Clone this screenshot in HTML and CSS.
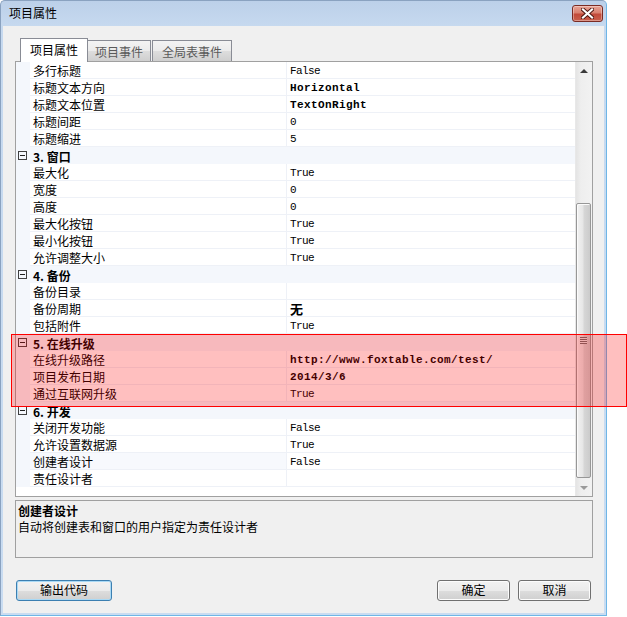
FILE: index.html
```html
<!DOCTYPE html>
<html>
<head>
<meta charset="utf-8">
<title>项目属性</title>
<link rel="stylesheet" href="styles.css">
</head>
<body>
<div class="window">
  <div class="titlebar">
    <span class="title">项目属性</span>
    <div class="close">
      <svg width="13" height="11" viewBox="0 0 13 11">
        <path d="M2 1.5 L11 9.5 M11 1.5 L2 9.5" stroke="#4a1510" stroke-width="4" stroke-linecap="square" fill="none"/>
        <path d="M2 1.5 L11 9.5 M11 1.5 L2 9.5" stroke="#ffffff" stroke-width="2.2" stroke-linecap="square" fill="none"/>
      </svg>
    </div>
  </div>
  <div class="client">
    <div class="tabs">
      <div class="tab active">项目属性</div>
      <div class="tab">项目事件</div>
      <div class="tab">全局表事件</div>
    </div>
    <div class="grid">
      <div class="rows">
        <div class="row"><div class="m"></div><div class="n">多行标题</div><div class="v">False</div></div>
        <div class="row"><div class="m"></div><div class="n">标题文本方向</div><div class="v b">Horizontal</div></div>
        <div class="row"><div class="m"></div><div class="n">标题文本位置</div><div class="v b">TextOnRight</div></div>
        <div class="row"><div class="m"></div><div class="n">标题间距</div><div class="v">0</div></div>
        <div class="row"><div class="m"></div><div class="n">标题缩进</div><div class="v">5</div></div>
        <div class="row cat"><div class="m"><span class="box"></span></div><div class="c">3. 窗口</div></div>
        <div class="row"><div class="m"></div><div class="n">最大化</div><div class="v">True</div></div>
        <div class="row"><div class="m"></div><div class="n">宽度</div><div class="v">0</div></div>
        <div class="row"><div class="m"></div><div class="n">高度</div><div class="v">0</div></div>
        <div class="row"><div class="m"></div><div class="n">最大化按钮</div><div class="v">True</div></div>
        <div class="row"><div class="m"></div><div class="n">最小化按钮</div><div class="v">True</div></div>
        <div class="row"><div class="m"></div><div class="n">允许调整大小</div><div class="v">True</div></div>
        <div class="row cat"><div class="m"><span class="box"></span></div><div class="c">4. 备份</div></div>
        <div class="row"><div class="m"></div><div class="n">备份目录</div><div class="v"></div></div>
        <div class="row"><div class="m"></div><div class="n">备份周期</div><div class="v cjk">无</div></div>
        <div class="row"><div class="m"></div><div class="n">包括附件</div><div class="v">True</div></div>
        <div class="row cat"><div class="m"><span class="box"></span></div><div class="c">5. 在线升级</div></div>
        <div class="row"><div class="m"></div><div class="n">在线升级路径</div><div class="v b">http://www.foxtable.com/test/</div></div>
        <div class="row"><div class="m"></div><div class="n">项目发布日期</div><div class="v b">2014/3/6</div></div>
        <div class="row"><div class="m"></div><div class="n">通过互联网升级</div><div class="v">True</div></div>
        <div class="row cat"><div class="m"><span class="box"></span></div><div class="c">6. 开发</div></div>
        <div class="row"><div class="m"></div><div class="n">关闭开发功能</div><div class="v">False</div></div>
        <div class="row"><div class="m"></div><div class="n">允许设置数据源</div><div class="v">True</div></div>
        <div class="row selected"><div class="m"></div><div class="n">创建者设计</div><div class="v">False</div></div>
        <div class="row"><div class="m"></div><div class="n">责任设计者</div><div class="v"></div></div>
      </div>
      <div class="scrollbar">
        <div class="sb-btn"><span class="arrow up"></span></div>
        <div class="sb-track">
          <div class="thumb"><span class="grip"></span></div>
        </div>
        <div class="sb-btn"><span class="arrow down"></span></div>
      </div>
    </div>
    <div class="desc">
      <div class="desc-title">创建者设计</div>
      <div class="desc-text">自动将创建表和窗口的用户指定为责任设计者</div>
    </div>
    <div class="buttons">
      <div class="btn default wide">输出代码</div>
      <div class="btn">确定</div>
      <div class="btn">取消</div>
    </div>
  </div>
</div>
<div class="highlight"></div>
</body>
</html>
```

FILE: styles.css
```css
* { box-sizing: border-box; }
html, body { margin: 0; padding: 0; background: #ffffff; }
body {
  font-family: "Noto Sans CJK SC", "Noto Sans", sans-serif;
  font-size: 12px;
  color: #000;
  width: 627px;
  height: 617px;
  overflow: hidden;
  position: relative;
}

.window {
  width: 607px;
  height: 616px;
  border: 1px solid #8aa2c0;
  border-right-color: #6fb6e6;
  border-bottom-color: #6fb6e6;
  border-radius: 5px 5px 0 0;
  background: linear-gradient(#bcd0e9 0, #c6d9ef 25px, #c9dcf1 100%);
  padding: 0 2px 2px 2px;
  display: flex;
  flex-direction: column;
}

.titlebar {
  height: 25px;
  display: flex;
  align-items: flex-start;
  padding-left: 6px;
}
.title {
  line-height: 24px;
  font-size: 12px;
  color: #000;
}
.close {
  margin-left: auto;
  margin-top: 4px;
  margin-right: 1px;
  width: 31px;
  height: 17px;
  border: 1px solid #7a2b24;
  border-radius: 3px;
  background: linear-gradient(#e8a396 0, #d98170 45%, #c24a3a 55%, #c9604d 100%);
  box-shadow: inset 0 0 0 1px rgba(255,255,255,0.35);
  display: flex;
  align-items: center;
  justify-content: center;
}

.client {
  flex: 1;
  background: #f0f0f0;
  display: flex;
  flex-direction: column;
}

.tabs {
  margin-top: 12px;
  padding-left: 17px;
  height: 23px;
  display: flex;
  align-items: flex-end;
}
.tab {
  height: 21px;
  padding: 0 7px;
  border: 1px solid #898c95;
  border-bottom: none;
  border-left: none;
  background: linear-gradient(#f3f3f3 0, #ebebeb 50%, #dddddd 51%, #cfcfcf 100%);
  color: #5a5a5a;
  line-height: 21px;
  white-space: nowrap;
}
.tab:nth-child(3) { padding: 0 9px; border-left: 1px solid #898c95; margin-left: 1px; }
.tab.active {
  height: 24px;
  margin-bottom: -1px;
  padding: 0 9px;
  border-left: 1px solid #898c95;
  background: #ffffff;
  color: #000;
  line-height: 22px;
  position: relative;
  z-index: 1;
}

.grid {
  margin-left: 12px;
  width: 578px;
  height: 436px;
  border: 1px solid #a0a0a0;
  background: #fff;
  display: flex;
}
.rows {
  flex: 1;
  overflow: hidden;
}
.row {
  height: 17px;
  display: flex;
}
.m {
  width: 14px;
  background: #f4f7fc;
  flex: none;
  display: flex;
  align-items: center;
}
.n {
  width: 257px;
  flex: none;
  padding-left: 3px;
  padding-top: 2px;
  line-height: 14px;
  border-bottom: 1px solid #eef1f7;
  border-right: 1px solid #eef1f7;
  white-space: nowrap;
}
.v {
  flex: 1;
  padding-left: 3px;
  padding-top: 2px;
  line-height: 14px;
  border-bottom: 1px solid #eef1f7;
  font-family: "Liberation Mono", monospace;
  font-size: 11px;
  letter-spacing: -0.6px;
  white-space: nowrap;
}
.v.b { font-weight: bold; letter-spacing: 0.4px; }
.v.cjk {
  font-family: "Noto Sans CJK SC", sans-serif;
  font-weight: bold;
  font-size: 13px;
  letter-spacing: 0;
}
.row.selected .n { background: #f7f9fd; }
.row.cat { background: #f4f7fc; }
.c {
  flex: 1;
  padding-left: 3px;
  padding-top: 2px;
  line-height: 15px;
  font-weight: bold;
}
.box {
  margin-left: 2px;
  width: 9px;
  height: 9px;
  border: 1px solid #404040;
  position: relative;
  background: #f4f7fc;
}
.box::after {
  content: "";
  position: absolute;
  left: 1px;
  right: 1px;
  top: 3px;
  height: 1px;
  background: #202020;
}

.scrollbar {
  width: 17px;
  flex: none;
  display: flex;
  flex-direction: column;
  background: linear-gradient(to right, #e4e4e4 0, #eeeeee 30%, #f2f2f2 100%);
  border-left: 1px solid #e8e8e8;
}
.sb-btn {
  height: 17px;
  flex: none;
  display: flex;
  align-items: center;
  justify-content: center;
}
.arrow {
  width: 0;
  height: 0;
  border-left: 4px solid transparent;
  border-right: 4px solid transparent;
}
.arrow.up { border-bottom: 4px solid #3a3a3a; }
.arrow.down { border-top: 4px solid #9a9a9a; }
.sb-track {
  flex: 1;
}
.thumb {
  margin-top: 124px;
  width: 15px;
  height: 275px;
  border: 1px solid #979797;
  border-radius: 2px;
  background: linear-gradient(to right, #f2f2f2 0, #e6e6e6 45%, #d6d6d6 55%, #cbcbcb 100%);
  box-shadow: inset 1px 1px 0 #fbfbfb;
  display: flex;
  align-items: center;
  justify-content: center;
}
.grip {
  width: 7px;
  height: 7px;
  background: repeating-linear-gradient(#6c6c6c 0, #6c6c6c 1px, #e8e8e8 1px, #e8e8e8 2px);
}

.desc {
  margin-top: 3px;
  margin-left: 12px;
  width: 578px;
  height: 58px;
  border: 1px solid #a0a0a0;
  padding: 2px 2px;
}
.desc-title { font-weight: bold; line-height: 16px; }
.desc-text { line-height: 16px; }

.buttons {
  margin-top: 22px;
  padding: 0 13px;
  display: flex;
  gap: 8px;
}
.btn {
  width: 73px;
  height: 21px;
  border: 1px solid #707070;
  border-radius: 3px;
  background: linear-gradient(#f2f2f2 0, #ebebeb 50%, #dddddd 51%, #cfcfcf 100%);
  box-shadow: inset 0 0 0 1px #fcfcfc;
  text-align: center;
  line-height: 18px;
}
.btn.wide { width: 96px; margin-right: auto; }
.btn.default {
  border-color: #3c7fb1;
  box-shadow: inset 0 0 0 1px #a9d9f5;
}

.highlight {
  position: absolute;
  left: 11px;
  top: 334px;
  width: 616px;
  height: 73px;
  border: 1px solid #ff0000;
  background: rgba(255, 0, 0, 0.25);
}
```
